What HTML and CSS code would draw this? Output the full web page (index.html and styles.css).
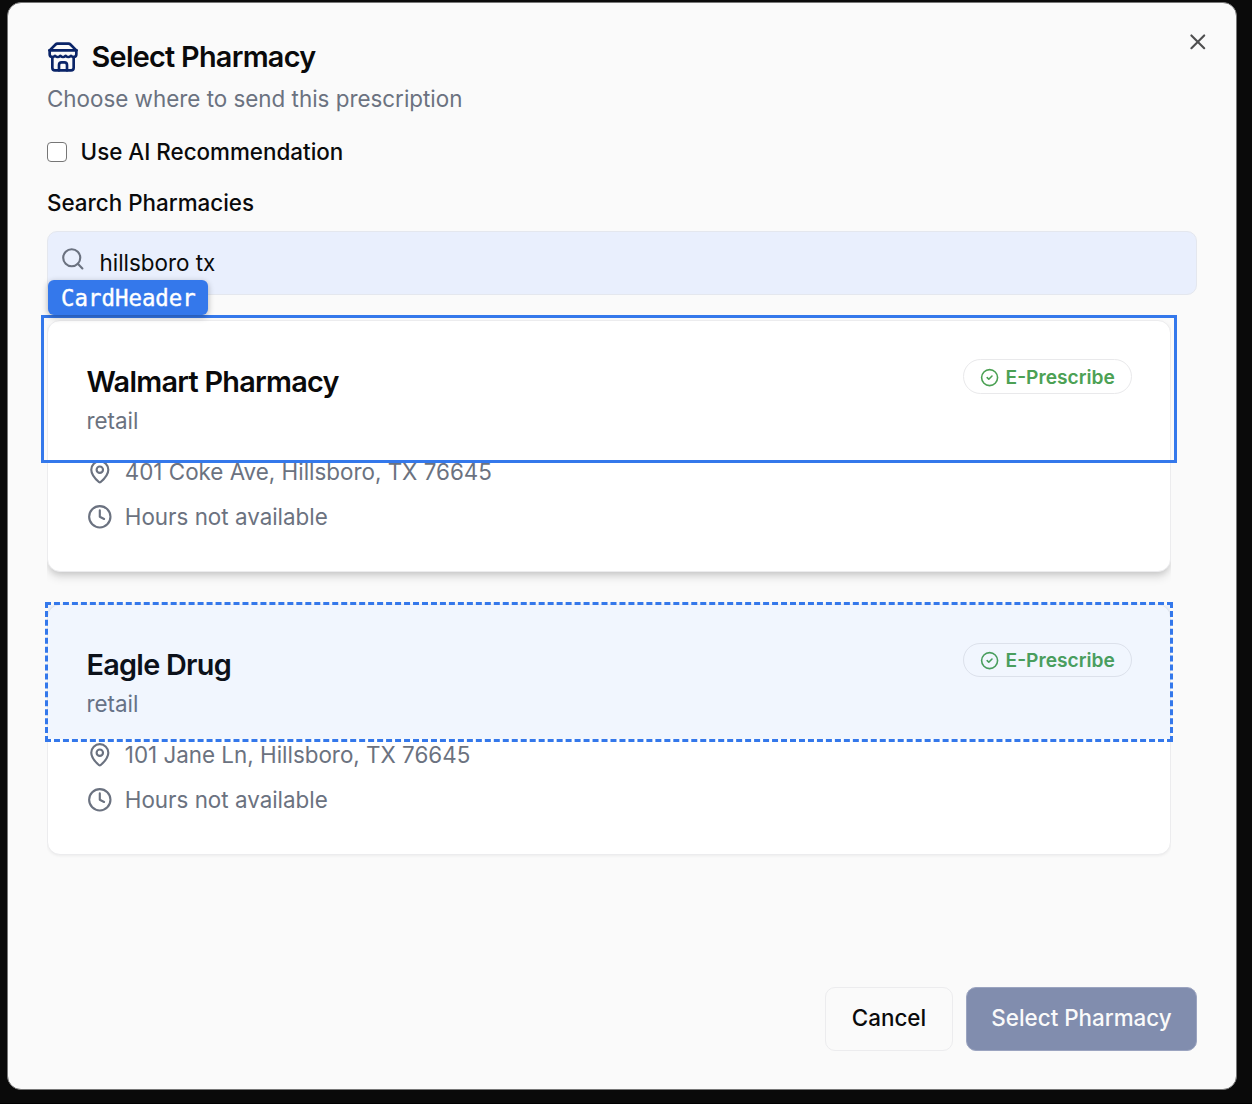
FILE: index.html
```html
<!DOCTYPE html>
<html lang="en">
<head>
<meta charset="utf-8">
<title>Select Pharmacy</title>
<link rel="stylesheet" href="styles.css">
</head>
<body>
<svg class="sprite" aria-hidden="true">
  <symbol id="pin" viewBox="0 0 24 24"><path d="M20 10c0 4.993-5.539 10.193-7.399 11.799a1 1 0 0 1-1.202 0C9.539 20.193 4 14.993 4 10a8 8 0 0 1 16 0"/><circle cx="12" cy="10" r="3"/></symbol>
  <symbol id="clock" viewBox="0 0 24 24"><circle cx="12" cy="12" r="10"/><path d="M12 6v6l4 2"/></symbol>
  <symbol id="check" viewBox="0 0 24 24"><circle cx="12" cy="12" r="10"/><path d="m9 12 2 2 4-4"/></symbol>
</svg>
<main class="dialog">
  <button class="close" aria-label="Close"><svg class="icon" viewBox="0 0 24 24"><path d="M18 6 6 18M6 6l12 12"/></svg></button>
  <header class="header">
    <div class="title-row">
      <svg class="icon store" viewBox="0 0 24 24"><path d="m2 7 4.41-4.41A2 2 0 0 1 7.83 2h8.34a2 2 0 0 1 1.42.59L22 7"/><path d="M4 12v8a2 2 0 0 0 2 2h12a2 2 0 0 0 2-2v-8"/><path d="M15 22v-4a2 2 0 0 0-2-2h-2a2 2 0 0 0-2 2v4"/><path d="M2 7h20"/><path d="M22 7v3a2 2 0 0 1-2 2a2.7 2.7 0 0 1-1.59-.63.7.7 0 0 0-.82 0A2.7 2.7 0 0 1 16 12a2.7 2.7 0 0 1-1.59-.63.7.7 0 0 0-.82 0A2.7 2.7 0 0 1 12 12a2.7 2.7 0 0 1-1.59-.63.7.7 0 0 0-.82 0A2.7 2.7 0 0 1 8 12a2.7 2.7 0 0 1-1.59-.63.7.7 0 0 0-.82 0A2.7 2.7 0 0 1 4 12a2 2 0 0 1-2-2V7"/></svg>
      <h1 class="title">Select Pharmacy</h1>
    </div>
    <p class="subtitle">Choose where to send this prescription</p>
  </header>
  <label class="option"><span class="checkbox"></span><span>Use AI Recommendation</span></label>
  <div class="field-label">Search Pharmacies</div>
  <div class="search">
    <svg class="icon search-icon" viewBox="0 0 24 24"><circle cx="11" cy="11" r="8"/><path d="m21 21-4.3-4.3"/></svg>
    <span class="query">hillsboro tx</span>
  </div>
  <div class="list">
    <article class="card raised">
      <div class="card-head">
        <div><h2 class="name">Walmart Pharmacy</h2><p class="kind">retail</p></div>
        <span class="badge"><svg class="icon"><use href="#check"/></svg><span>E-Prescribe</span></span>
      </div>
      <div class="detail"><svg class="icon"><use href="#pin"/></svg><span>401 Coke Ave, Hillsboro, TX 76645</span></div>
      <div class="detail"><svg class="icon"><use href="#clock"/></svg><span>Hours not available</span></div>
    </article>
    <article class="card">
      <div class="card-head">
        <div><h2 class="name">Eagle Drug</h2><p class="kind">retail</p></div>
        <span class="badge"><svg class="icon"><use href="#check"/></svg><span>E-Prescribe</span></span>
      </div>
      <div class="detail"><svg class="icon"><use href="#pin"/></svg><span>101 Jane Ln, Hillsboro, TX 76645</span></div>
      <div class="detail"><svg class="icon"><use href="#clock"/></svg><span>Hours not available</span></div>
    </article>
  </div>
  <footer class="footer">
    <button class="button cancel">Cancel</button>
    <button class="button primary">Select Pharmacy</button>
  </footer>
</main>
<div class="outline hovered"></div>
<div class="outline selected"></div>
<div class="tag">CardHeader</div>
</body>
</html>
```
FILE: styles.css
```css
* { box-sizing: border-box; }
body {
  margin: 0;
  padding: 2px 0 0 7px;
  width: 1252px;
  height: 1104px;
  overflow: hidden;
  background: #0a0a0a;
  border-bottom: 1px solid #000;
  color: #0a0a0b;
  font: 400 22.4px/32px Inter, sans-serif;
}
h1, h2, p { margin: 0; }
.sprite { position: absolute; width: 0; height: 0; }
.icon {
  width: 25.6px;
  height: 25.6px;
  flex: none;
  fill: none;
  stroke: currentColor;
  stroke-width: 2;
  stroke-linecap: round;
  stroke-linejoin: round;
}
.dialog {
  position: relative;
  display: flex;
  flex-direction: column;
  width: 1230px;
  height: 1088px;
  padding: 38px 39px;
  background: #fafafa;
  border: 1px solid #777;
  border-radius: 14px;
}
.close {
  position: absolute;
  top: 26.4px;
  right: 25.6px;
  display: flex;
  padding: 0;
  border: 0;
  background: none;
  color: #4f4f50;
}
.title-row { display: flex; gap: 13px; height: 34px; }
.store { width: 32px; height: 32px; margin: 0 0 0 -0.4px; color: #0a2468; }
.title, .name {
  font-size: 28.8px;
  font-weight: 600;
  line-height: 32px;
  letter-spacing: -0.72px;
}
.subtitle { margin-top: 8px; color: #6b7280; }
.option {
  display: flex;
  align-items: center;
  gap: 13.6px;
  margin-top: 21px;
  font-weight: 500;
}
.checkbox {
  width: 20px;
  height: 20px;
  background: #fff;
  border: 1.5px solid #767676;
  border-radius: 4px;
}
.field-label { margin-top: 19px; font-weight: 500; }
.search {
  display: flex;
  gap: 14.4px;
  height: 64px;
  margin-top: 11.5px;
  padding: 14.5px 12px 14px 11.5px;
  background: #e9effd;
  border: 1px solid #e4e7ee;
  border-radius: 10px;
}
.search-icon { color: #6b7280; }
.query { margin-top: 1px; }
.list {
  display: flex;
  flex-direction: column;
  gap: 32px;
  width: 1124.4px;
  height: 640px;
  margin-top: 16px;
  padding-top: 9.9px;
  overflow: hidden;
}
.card {
  flex: none;
  height: 251.5px;
  padding: 38px 38.5px;
  background: #fff;
  border: 1px solid #ececee;
  border-radius: 13px;
  box-shadow: 0 1px 3px rgba(0,0,0,.06);
}
.raised { box-shadow: 0 6px 10px -1px rgba(0,0,0,.13), 0 3px 6px -2px rgba(0,0,0,.12); }
.card-head { display: flex; justify-content: space-between; height: 96.2px; padding-top: 6.2px; }
.kind { margin-top: 7px; color: #6b7280; }
.badge {
  display: flex;
  align-items: center;
  gap: 6px;
  height: 34.5px;
  margin-top: -6.2px;
  padding: 0 16px;
  border: 1px solid #e9e9eb;
  border-radius: 18px;
  color: #4ca154;
  font-size: 19.2px;
  font-weight: 600;
}
.badge .icon { width: 19.2px; height: 19.2px; margin-top: 1px; }
.detail {
  display: flex;
  align-items: center;
  gap: 12.7px;
  height: 32px;
  margin-bottom: 13px;
  color: #6b7280;
}
.footer { display: flex; justify-content: flex-end; gap: 13px; margin-top: 36px; }
.button {
  height: 64px;
  padding: 0 0 1px;
  border: 1px solid #ececee;
  border-radius: 10px;
  font: inherit;
  font-weight: 500;
}
.cancel { width: 128px; background: #fafafa; color: #0a0a0b; }
.primary { width: 231px; background: #818dae; border-color: #9ba4c0; color: #fafafa; }
/* Inspector overlays drawn over the dialog */
.outline { position: absolute; border: 3px solid #3478eb; }
.hovered { left: 41px; top: 315px; width: 1136px; height: 148px; }
.selected {
  left: 45px;
  top: 602px;
  width: 1128px;
  height: 140px;
  border-style: dashed;
  background: rgba(52,120,235,.065) padding-box;
}
.tag {
  position: absolute;
  left: 48px;
  top: 280px;
  width: 160px;
  height: 35px;
  padding-left: 13px;
  background: #3478eb;
  border-radius: 6px;
  box-shadow: 0 2px 6px rgba(0,0,0,.3);
  color: #fff;
  font: 22.4px/36px "DejaVu Sans Mono", monospace;
  -webkit-text-stroke: 0.4px #fff;
}
```
